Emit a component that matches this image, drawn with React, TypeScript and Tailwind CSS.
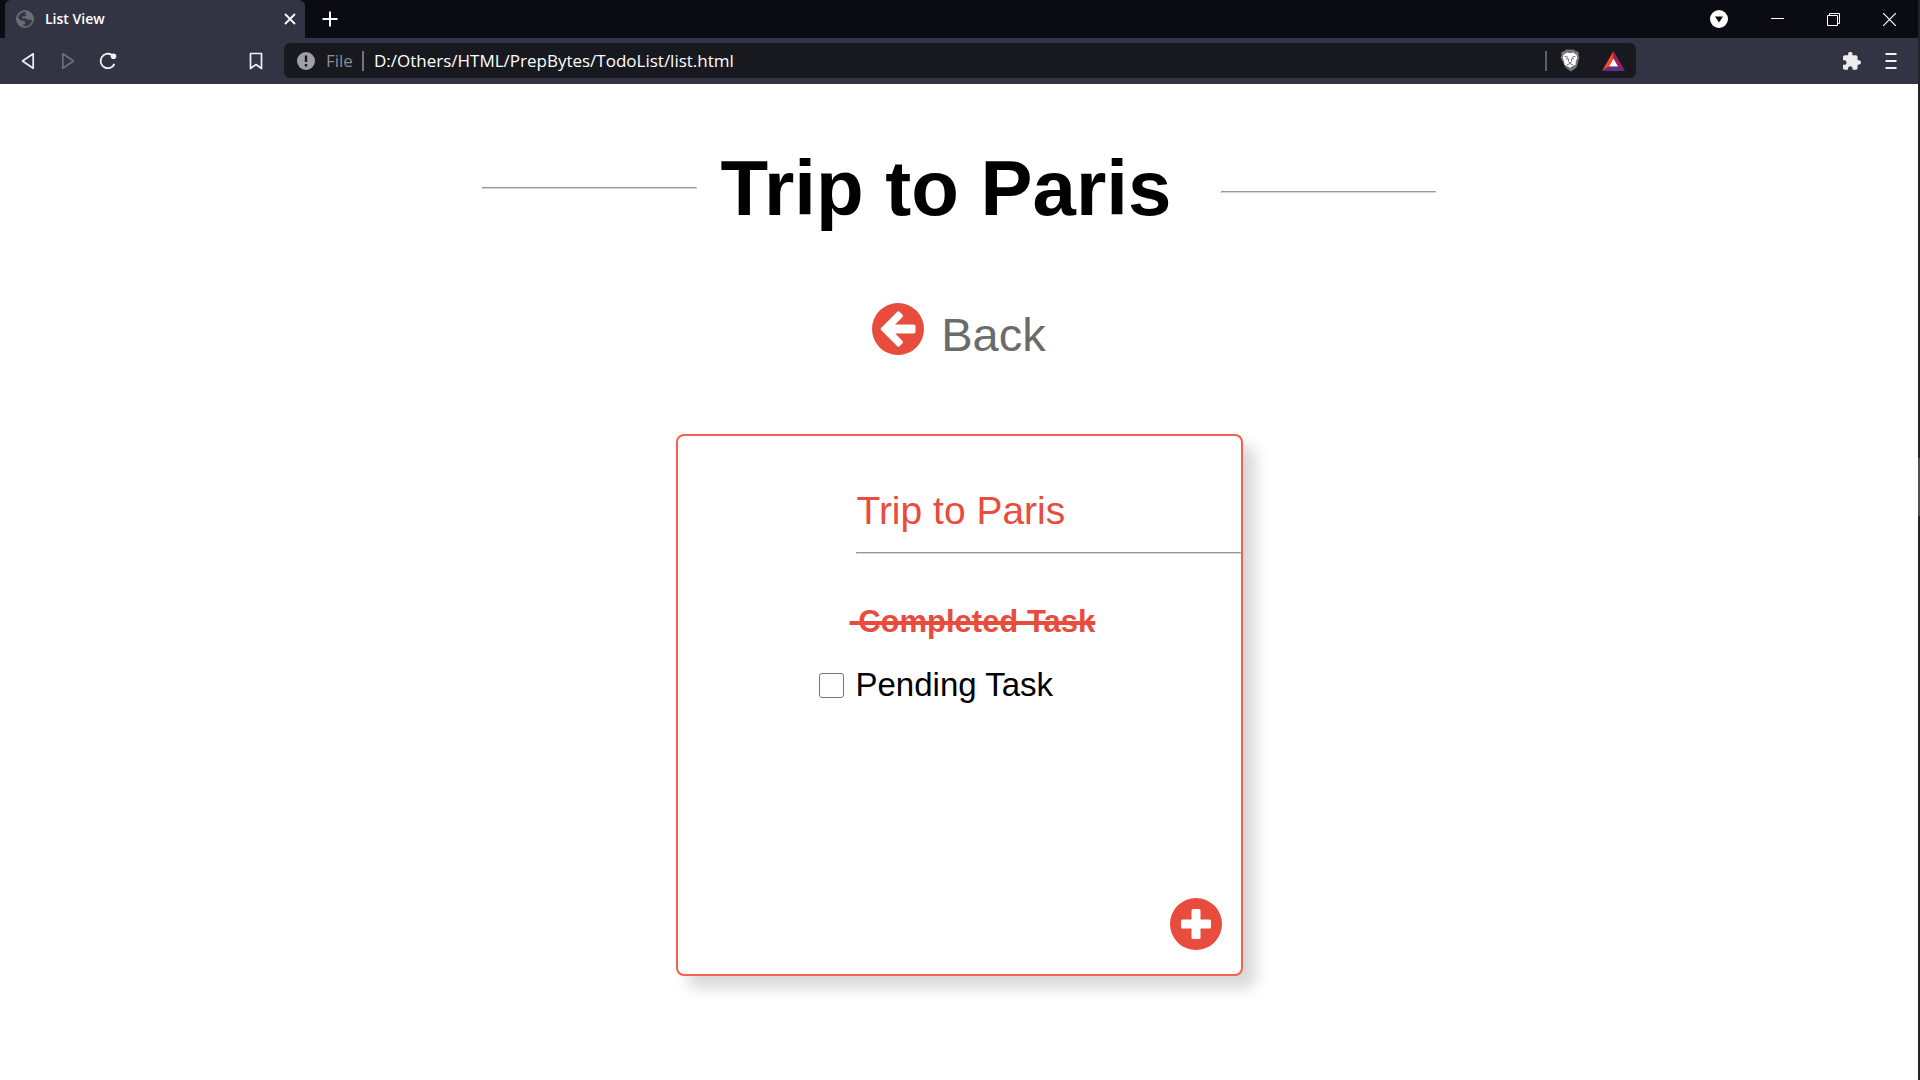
import React from "react";

function GlobeIcon() {
  return (
    <svg width="18" height="18" viewBox="0 0 18 18" aria-hidden="true">
      <circle cx="9" cy="9" r="9" fill="#6b6d74" />
      <path
        d="M2 8C2.500 5 5 2.500 8 2L10 2.200 9 4 10.500 5.200 8.500 6.500 6 6.500 6.500 8.300 10 8.600 11.500 10 14 9.500 16 10.500C15.500 13.500 13 16 10 16.200L6.500 15.500 9.500 13.500 8.500 11 5 10.500Z"
        fill="#343644"
      />
    </svg>
  );
}

function LionIcon() {
  return (
    <svg width="20" height="23" viewBox="0 0 20 23" aria-hidden="true">
      <path
        d="M6 .5h8l1.800 1.800 1.700-.1 1.500 2-.5 1.600.9 2.700-2.500 9c-.5 1.500-3.500 3.200-5.900 5.100-2.400-1.900-5.400-3.600-5.900-5.100L.6 8.500l.9-2.700L1 4.200l1.500-2 1.700.1z"
        fill="#757575"
      />
      <path
        d="M7 3.500l3 .7 3-.7 3.500 2.300.8 3-1.500 3.600-.3 3.300-2.300 1-3.200 2-3.200-2-2.300-1-.3-3.300L2.700 8.800l.8-3z"
        fill="#fff"
      />
      <path
        d="M4.500 7.300l3.500.9M15.500 7.300l-3.500.9M6 9.800h2.400v2.700L10 14l1.600-1.500V9.800H14M7 15.800l3-1.300 3 1.300"
        fill="none"
        stroke="#757575"
        strokeWidth="1"
      />
    </svg>
  );
}

function TriangleIcon() {
  return (
    <svg width="23" height="20" viewBox="0 0 23 20" aria-hidden="true">
      <path d="M11.500 0L0 20l7-4.500 4.500-8z" fill="#ff4724" />
      <path d="M11.500 0L23 20l-7-4.500-4.500-8z" fill="#9e1f63" />
      <path d="M0 20h23l-7-4.500H7z" fill="#662d91" />
      <path d="M11.500 7.500L7 15.500h9z" fill="#fff" />
    </svg>
  );
}

function BackIcon() {
  return (
    <svg width="52" height="52" viewBox="0 0 52 52" aria-hidden="true">
      <circle cx="26" cy="26" r="26" fill="#e84c3d" />
      <path
        d="M9 25.100L25.300 8.800q1.100-1 2.200 0l3 3q1 1.100 0 2.200L23.200 21.500h18.500q1.800 0 1.800 1.800v5.400q0 1.800-1.800 1.800H23.200l7.300 7.500q1 1.100 0 2.200l-3 3q-1.100 1-2.200 0L9 26.900q-.7-.9 0-1.800z"
        fill="#fff"
      />
    </svg>
  );
}

function PlusIcon() {
  return (
    <svg width="52" height="52" viewBox="0 0 52 52" aria-hidden="true">
      <circle cx="26" cy="26" r="26" fill="#e84c3d" />
      <rect x="11" y="21.500" width="30" height="9" rx="1.500" fill="#fff" />
      <rect x="21.500" y="11" width="9" height="30" rx="1.500" fill="#fff" />
    </svg>
  );
}

const iconButton = "flex shrink-0 items-center justify-center";

function TabStrip() {
  return (
    <div className="flex h-[38px] items-center bg-[#0b0b14] pl-[5px] pr-[22px] text-white">
      <div className="flex h-full w-[300px] items-center rounded-t-md bg-[#323443] pl-[11px] pr-[9px]">
        <GlobeIcon />
        <span className="ml-[11px] flex-1 text-sm font-semibold">List View</span>
        <button type="button" aria-label="Close tab" className={iconButton}>
          <svg width="12" height="12" viewBox="0 0 12 12" stroke="#fff" strokeWidth="1.800">
            <path d="M1 1l10 10M11 1L1 11" />
          </svg>
        </button>
      </div>
      <button type="button" aria-label="New tab" className="ml-[17px] flex">
        <svg width="16" height="16" viewBox="0 0 16 16" stroke="#fff" strokeWidth="2">
          <path d="M8 .5v15M.5 8h15" />
        </svg>
      </button>
      <div className="ml-auto flex items-center gap-[43px]">
        <button type="button" aria-label="Search tabs" className={iconButton}>
          <svg width="18" height="18" viewBox="0 0 18 18">
            <circle cx="9" cy="9" r="9" fill="#fff" />
            <path d="M5 6.500h8l-4 6z" fill="#0b0b14" />
          </svg>
        </button>
        <button type="button" aria-label="Minimize" className={iconButton}>
          <svg width="13" height="13" viewBox="0 0 13 13" stroke="#fff">
            <path d="M0 5.500h13" />
          </svg>
        </button>
        <button type="button" aria-label="Restore" className={iconButton}>
          <svg width="13" height="13" viewBox="0 0 13 13" stroke="#fff" fill="none">
            <path d="M.5 2.500h10v10H.5zM2.500 2.500v-2h10v10h-2" />
          </svg>
        </button>
        <button type="button" aria-label="Close window" className={iconButton}>
          <svg width="13" height="13" viewBox="0 0 13 13" stroke="#fff" strokeWidth="1.200">
            <path d="M0 0l13 13M13 0l-13 13" />
          </svg>
        </button>
      </div>
    </div>
  );
}

function Toolbar() {
  return (
    <div className="flex h-[46px] items-center bg-[#323443] pl-[21px] pr-[21px]">
      <div className="flex w-[263px] shrink-0 items-center">
        <button type="button" aria-label="Go back" className={iconButton}>
          <svg width="14" height="18" viewBox="0 0 14 18" fill="none" stroke="#f1f1f3" strokeWidth="1.700" strokeLinejoin="round">
            <path d="M12.200 1.800v14.400L1.500 9z" />
          </svg>
        </button>
        <button type="button" aria-label="Go forward" className="ml-[26px] flex">
          <svg width="14" height="18" viewBox="0 0 14 18" fill="none" stroke="#6c6e7a" strokeWidth="1.700" strokeLinejoin="round">
            <path d="M1.800 1.800v14.400L12.500 9z" />
          </svg>
        </button>
        <button type="button" aria-label="Reload" className="ml-[24px] flex">
          <svg width="18" height="18" viewBox="0 0 18 18" fill="none" stroke="#f1f1f3" strokeWidth="1.800">
            <path d="M15.400 12A7.200 7.200 0 1 1 13 3.100" />
            <circle cx="14.500" cy="4.200" r="2.800" fill="#f1f1f3" stroke="none" />
          </svg>
        </button>
        <button type="button" aria-label="Bookmark" className="ml-auto mr-[21px] flex">
          <svg width="14" height="18" viewBox="0 0 14 18" fill="none" stroke="#f1f1f3" strokeWidth="1.700" strokeLinejoin="round">
            <path d="M1.500 1.500h11v15L7 12.500l-5.500 4z" />
          </svg>
        </button>
      </div>
      <div className="mb-px flex h-[35px] w-[1352px] items-center rounded-md bg-[#17191f] pl-[13px] pr-[11px] text-[17px]">
        <svg className="shrink-0" width="18" height="18" viewBox="0 0 18 18" aria-hidden="true">
          <circle cx="9" cy="9" r="9" fill="#9da0a8" />
          <path d="M9 3.500v6.500M9 12v2.500" stroke="#17191f" strokeWidth="2.400" />
        </svg>
        <span className="ml-[11px] text-[#8b8e96]">File</span>
        <span className="ml-[9px] h-5 w-[2px] shrink-0 bg-[#74767c]" />
        <input
          aria-label="Address"
          defaultValue="D:/Others/HTML/PrepBytes/TodoList/list.html"
          className="ml-[10px] min-w-0 flex-1 bg-transparent text-white outline-none"
        />
        <span className="h-5 w-[2px] shrink-0 bg-[#5d5f66]" />
        <button type="button" aria-label="Shields" className="ml-[13px] flex">
          <LionIcon />
        </button>
        <button type="button" aria-label="Rewards" className="ml-[22px] flex">
          <TriangleIcon />
        </button>
      </div>
      <div className="ml-auto flex items-center gap-[24px]">
        <button type="button" aria-label="Extensions" className={iconButton}>
          <svg width="18" height="18" viewBox="2 1.500 21 20.500" fill="#ececee">
            <path d="M20.500 11H19V7c0-1.100-.9-2-2-2h-4V3.500a2.500 2.500 0 0 0-5 0V5H4c-1.100 0-1.990.9-1.990 2v3.800H3.500c1.490 0 2.700 1.210 2.700 2.700s-1.210 2.700-2.700 2.700H2V20c0 1.100.9 2 2 2h3.800v-1.500c0-1.490 1.210-2.700 2.700-2.700s2.700 1.210 2.700 2.700V22H17c1.100 0 2-.9 2-2v-4h1.500a2.500 2.500 0 0 0 0-5z" />
          </svg>
        </button>
        <button type="button" aria-label="Menu" className={iconButton}>
          <svg width="12" height="16" viewBox="0 0 12 16" stroke="#f1f1f3" strokeWidth="2">
            <path d="M.5 1h11M.5 8h11M.5 15h11" />
          </svg>
        </button>
      </div>
    </div>
  );
}

function Rule({ className }: { className: string }) {
  return <hr className={`h-0 shrink-0 border border-b-[#d8d8d8] border-l-[#9a9a9a] border-r-[#d8d8d8] border-t-[#969696] ${className}`} />;
}

export default function App() {
  return (
    <div className="flex min-h-screen bg-white">
      <div className="min-w-0 flex-1">
        <header className="font-['Open_Sans',sans-serif]">
          <TabStrip />
          <Toolbar />
        </header>
        <main className="flex flex-col items-center font-['Liberation_Sans',Arial,sans-serif]">
          <div className="mt-[58px] flex items-center">
            <Rule className="w-[215px]" />
            <h1 className="ml-6 mr-[50px] text-[78px] leading-[92px] font-bold text-black">Trip to Paris</h1>
            <Rule className="mt-2 w-[215px]" />
          </div>
          <a href="#lists" className="mt-[69px] flex items-start text-[#6b6b6b]">
            <BackIcon />
            <span className="ml-[17px] pt-1 text-[47px] leading-[56px]">Back</span>
          </a>
          <section className="mt-[71px] flex h-[542px] w-[567px] flex-col rounded-lg border-2 border-[#f95f4f] bg-white shadow-[12px_12px_15px_rgba(0,0,0,0.16)]">
            <h2 className="mt-[52px] ml-[179px] text-[39px] leading-[46px] text-[#e84c3d]">Trip to Paris</h2>
            <Rule className="mt-[18px] ml-[178px]" />
            <ul className="mt-[50px] ml-[141px]">
              <li className="ml-[31px] text-[31px] leading-9 font-bold text-[#e84c3d]">
                <s className="whitespace-pre decoration-4">{"\u00a0"}Completed Task</s>
              </li>
              <li className="mt-[25px] flex items-center">
                <input
                  id="pending"
                  type="checkbox"
                  className="size-[25px] appearance-none rounded-[3px] border border-[#767676] bg-white checked:bg-[#e84c3d]"
                />
                <label htmlFor="pending" className="ml-3 text-[33px] leading-10 text-black">
                  Pending Task
                </label>
              </li>
            </ul>
            <button type="button" aria-label="Add task" className="mt-auto mr-[19px] mb-6 self-end">
              <PlusIcon />
            </button>
          </section>
        </main>
      </div>
      <div className="flex w-[2px] flex-col bg-[#242424] pt-[458px]" aria-hidden="true">
        <div className="h-[58px] bg-[#505050]" />
      </div>
    </div>
  );
}
